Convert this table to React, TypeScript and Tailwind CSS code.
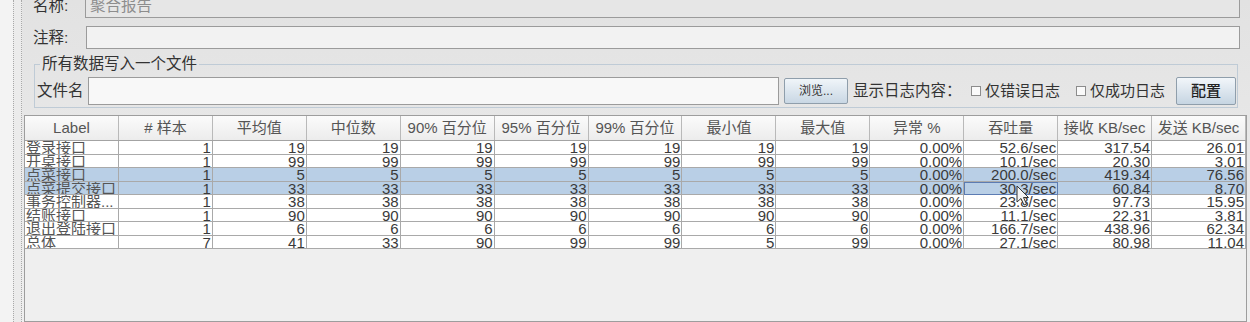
import React from 'react';

const cols = ['Label', '# 样本', '平均值', '中位数', '90% 百分位', '95% 百分位', '99% 百分位', '最小值', '最大值', '异常 %', '吞吐量', '接收 KB/sec', '发送 KB/sec'];

const rows: string[][] = [
  ['登录接口', '1', '19', '19', '19', '19', '19', '19', '19', '0.00%', '52.6/sec', '317.54', '26.01'],
  ['开桌接口', '1', '99', '99', '99', '99', '99', '99', '99', '0.00%', '10.1/sec', '20.30', '3.01'],
  ['点菜接口', '1', '5', '5', '5', '5', '5', '5', '5', '0.00%', '200.0/sec', '419.34', '76.56'],
  ['点菜提交接口', '1', '33', '33', '33', '33', '33', '33', '33', '0.00%', '30.3/sec', '60.84', '8.70'],
  ['事务控制器...', '1', '38', '38', '38', '38', '38', '38', '38', '0.00%', '23.8/sec', '97.73', '15.95'],
  ['结账接口', '1', '90', '90', '90', '90', '90', '90', '90', '0.00%', '11.1/sec', '22.31', '3.81'],
  ['退出登陆接口', '1', '6', '6', '6', '6', '6', '6', '6', '0.00%', '166.7/sec', '438.96', '62.34'],
  ['总体', '7', '41', '33', '90', '99', '99', '5', '99', '0.00%', '27.1/sec', '80.98', '11.04'],
];

const selected = [2, 3];

const Checkbox: React.FC<{ label: string; w: string }> = ({ label, w }) => (
  <div className={`flex items-center gap-[4px] whitespace-nowrap text-[15px] ${w}`}>
    <span className="shrink-0 ml-[1px] w-[10px] h-[10px] border border-[#8c8c8c] bg-[#fafafa]" />
    <span>{label}</span>
  </div>
);

const App: React.FC = () => {
  return (
    <div className="relative w-[1250px] h-[322px] overflow-hidden flex bg-[#eeeeee] text-[#333] font-['Liberation_Sans','Noto_Sans_CJK_SC',sans-serif]">
      {/* left tree edge + splitter */}
      <div className="w-[13px] bg-[#f3f3f3]" />
      <div className="w-[9px] border-l border-r border-dotted border-[#a9a9a9] bg-[#ebebeb]" />

      <div className="flex-1 flex flex-col bg-gradient-to-b from-[#e2e2e2] to-[#efefef]">
        {/* name */}
        <div className="-mt-[6px] h-[24px] flex items-center pl-[11px] pr-[10px] text-[15.5px]">
          <span className="w-[52px]">名称:</span>
          <div className="flex-1 h-full border border-[#9b9b9b] bg-[#e6e6e6] flex items-center pl-[4px] text-[#8d8d8d]">
            聚合报告
          </div>
        </div>

        {/* comment */}
        <div className="mt-[8px] h-[23px] flex items-center pl-[11px] pr-[10px] text-[15.5px]">
          <span className="w-[53px]">注释:</span>
          <div className="flex-1 h-full border border-[#9b9b9b] bg-[#f2f2f2]" />
        </div>

        {/* file group */}
        <fieldset className="mt-[5px] ml-[12px] mr-[12px] border border-[#bfcbd6] pl-[2px] pr-[1px] pb-[2px]">
          <legend className="ml-[3px] px-[2px] text-[15.5px] leading-[20px] text-[#333]">所有数据写入一个文件</legend>
          <div className="mt-[3px] h-[28px] flex items-center text-[15.5px]">
            <span className="w-[51px]">文件名</span>
            <div className="flex-1 h-full border border-[#9b9b9b] bg-[#f8f8f8]" />
            <button className="ml-[5px] w-[64px] h-[26px] rounded-[2px] border border-[#8f9eab] bg-gradient-to-b from-[#f0f5f9] to-[#c9d7e4] text-[12px] text-[#333]">
              浏览...
            </button>
            <span className="ml-[5px] w-[112px] whitespace-nowrap">显示日志内容：</span>
            <div className="ml-[5px] flex items-center gap-[9px]">
              <Checkbox label="仅错误日志" w="w-[96px]" />
              <Checkbox label="仅成功日志" w="w-[92px]" />
            </div>
            <button className="ml-[9px] w-[60px] h-[28px] rounded-[2px] border border-[#8f9eab] bg-gradient-to-b from-[#f2f6fa] to-[#c6d5e2] text-[15px] font-medium text-[#222]">
              配置
            </button>
          </div>
        </fieldset>

        {/* table */}
        <div className="mt-[7px] ml-[2px] mr-[3px] flex-1 border border-[#9d9d9d] bg-[#efefef]">
          <div className="grid grid-cols-[repeat(13,minmax(0,1fr))] h-[25px] border-b border-[#a3a3a3] bg-gradient-to-b from-[#fbfbfb] to-[#ececec]">
            {cols.map((c) => (
              <div key={c} className="flex items-center justify-center border-r border-[#b9b9b9] text-[15px] text-[#555] whitespace-nowrap">
                {c}
              </div>
            ))}
          </div>
          {rows.map((r, ri) => {
            const sel = selected.includes(ri);
            return (
              <div key={ri} className={`grid grid-cols-[repeat(13,minmax(0,1fr))] h-[13.5px] ${sel ? 'bg-[#b9cfe6]' : 'bg-white'}`}>
                {r.map((v, ci) => (
                  <div
                    key={ci}
                    className={`overflow-hidden whitespace-nowrap border-r border-b border-[#a9a9a9] text-[15px] leading-[13px] text-[#3a3a3a] ${
                      ci === 0 ? 'text-left pl-[1px] text-[#555]' : 'text-right pr-[1px]'
                    } ${ri === 3 && ci === 10 ? 'outline outline-1 -outline-offset-1 outline-[#5c7cb3]' : ''}`}
                  >
                    {v}
                  </div>
                ))}
              </div>
            );
          })}
        </div>
      </div>

      {/* mouse cursor */}
      <svg className="absolute left-[1016px] top-[185px]" width="14" height="22" viewBox="0 0 14 22">
        <path d="M1 1 L1 17 L5 13.5 L8 20 L10.5 19 L7.5 12.5 L12.5 12.5 Z" fill="#f4f4f4" stroke="#333" strokeWidth="1" strokeLinejoin="round" />
      </svg>
    </div>
  );
};

export default App;
